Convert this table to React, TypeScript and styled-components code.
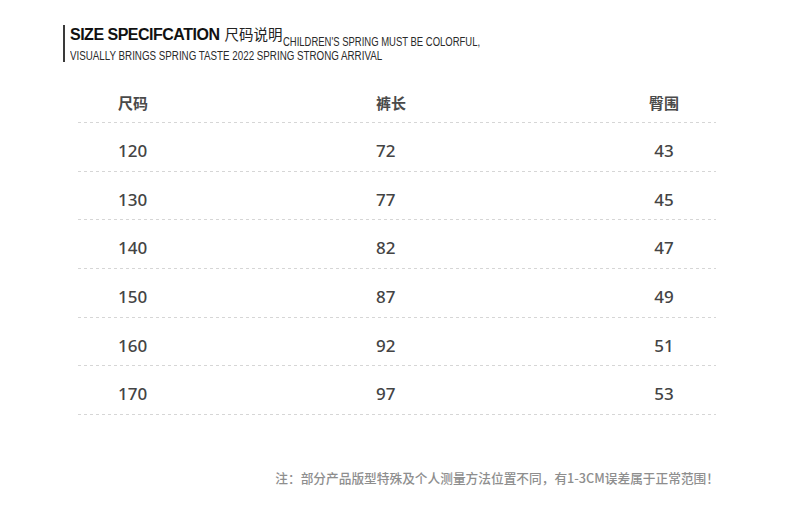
import styled, { createGlobalStyle } from "styled-components";

const rows = [
  { size: "120", length: "72", hip: "43" },
  { size: "130", length: "77", hip: "45" },
  { size: "140", length: "82", hip: "47" },
  { size: "150", length: "87", hip: "49" },
  { size: "160", length: "92", hip: "51" },
  { size: "170", length: "97", hip: "53" },
];

export default function App() {
  return (
    <Page>
      <GlobalStyle />
      <Heading>
        <TitleLine>
          <Title>SIZE SPECIFCATION</Title>
          <TitleCn>尺码说明</TitleCn>
          <Tagline>CHILDREN'S SPRING MUST BE COLORFUL,</Tagline>
        </TitleLine>
        <SubLine>VISUALLY BRINGS SPRING TASTE 2022 SPRING STRONG ARRIVAL</SubLine>
      </Heading>

      <Table>
        <HeadRow>
          <Cell>尺码</Cell>
          <Cell>裤长</Cell>
          <Cell $center>臀围</Cell>
        </HeadRow>
        {rows.map((r) => (
          <Row key={r.size}>
            <Num>{r.size}</Num>
            <Num>{r.length}</Num>
            <Num $center>{r.hip}</Num>
          </Row>
        ))}
      </Table>

      <Note>注：部分产品版型特殊及个人测量方法位置不同，有1-3CM误差属于正常范围！</Note>
    </Page>
  );
}

const GlobalStyle = createGlobalStyle`
  html, body {
    margin: 0;
    padding: 0;
    background: #ffffff;
  }
  body {
    font-family: "Noto Sans", "Noto Sans CJK SC", sans-serif;
  }
`;

const Page = styled.div`
  width: 790px;
  height: 509px;
  box-sizing: border-box;
  padding-top: 25px;
  display: flex;
  flex-direction: column;
  overflow: hidden;
`;

const Heading = styled.div`
  margin-left: 63px;
  border-left: 2px solid #3a3a3a;
  padding-left: 5px;
  height: 37px;
  display: flex;
  flex-direction: column;
`;

const TitleLine = styled.div`
  display: flex;
  align-items: flex-start;
  height: 24px;
  white-space: nowrap;
`;

const Title = styled.span`
  font-family: "Liberation Sans", Arial, sans-serif;
  font-weight: 700;
  font-size: 16px;
  line-height: 18px;
  margin-top: 1px;
  color: #111111;
  letter-spacing: -0.5px;
`;

const TitleCn = styled.span`
  font-family: "Noto Sans CJK SC", sans-serif;
  font-size: 14.5px;
  line-height: 18px;
  margin-left: 5px;
  color: #222222;
`;

const Tagline = styled.span`
  display: inline-block;
  font-family: "Liberation Sans", Arial, sans-serif;
  font-size: 12px;
  line-height: 14px;
  margin-top: 10px;
  margin-left: 1px;
  color: #2a2a2a;
  transform: scaleX(0.79);
  transform-origin: left center;
`;

const SubLine = styled.div`
  font-family: "Liberation Sans", Arial, sans-serif;
  font-size: 12px;
  line-height: 14px;
  color: #2a2a2a;
  white-space: nowrap;
  transform: scaleX(0.815);
  transform-origin: left center;
`;

const Table = styled.div`
  margin-left: 78px;
  margin-top: 23px;
  width: 638px;
  display: flex;
  flex-direction: column;
`;

const dashed = `
  background-image: linear-gradient(to right, #d6d6d6 0 3px, transparent 3px 6px);
  background-size: 6px 1px;
  background-repeat: repeat-x;
  background-position: left bottom;
`;

const HeadRow = styled.div`
  display: grid;
  grid-template-columns: 258px 258px 60px;
  padding-left: 40px;
  height: 38px;
  align-items: center;
  padding-bottom: 2px;
  box-sizing: border-box;
  ${dashed}
`;

const Row = styled.div`
  display: grid;
  grid-template-columns: 258px 258px 60px;
  padding-left: 40px;
  height: 48.7px;
  box-sizing: border-box;
  padding-top: 17px;
  ${dashed}
`;

const Cell = styled.div<{ $center?: boolean }>`
  font-family: "Noto Sans CJK SC", sans-serif;
  font-size: 15px;
  line-height: 20px;
  font-weight: 600;
  color: #4a4a4a;
  text-align: ${(p) => (p.$center ? "center" : "left")};
`;

const Num = styled.div<{ $center?: boolean }>`
  font-family: "Noto Sans", sans-serif;
  font-size: 17px;
  line-height: 22px;
  font-weight: 500;
  color: #444444;
  text-align: ${(p) => (p.$center ? "center" : "left")};
`;

const Note = styled.div`
  margin-top: 55px;
  width: 719px;
  text-align: right;
  font-family: "Noto Sans CJK SC", sans-serif;
  font-size: 12.7px;
  line-height: 16px;
  font-weight: 500;
  color: #8e8e8e;
  white-space: nowrap;
`;
